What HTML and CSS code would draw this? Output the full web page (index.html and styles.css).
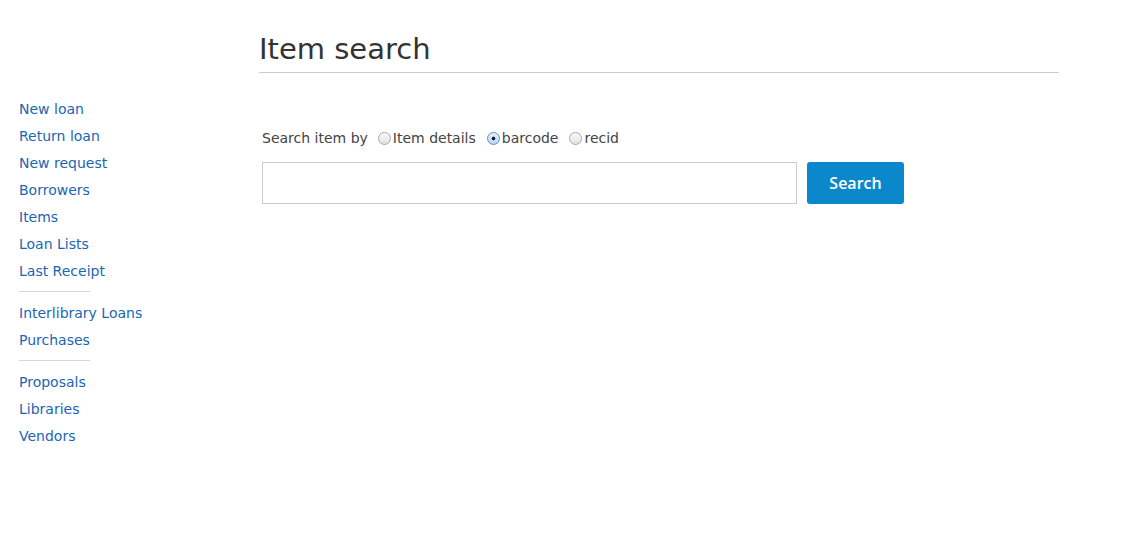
FILE: index.html
```html
<!DOCTYPE html>
<html>
<head>
<meta charset="utf-8">
<link rel="stylesheet" href="styles.css">
</head>
<body>
<div class="page">
  <nav class="sidebar">
    <a href="#">New loan</a>
    <a href="#">Return loan</a>
    <a href="#">New request</a>
    <a href="#">Borrowers</a>
    <a href="#">Items</a>
    <a href="#">Loan Lists</a>
    <a href="#">Last Receipt</a>
    <div class="sep"></div>
    <a href="#">Interlibrary Loans</a>
    <a href="#">Purchases</a>
    <div class="sep"></div>
    <a href="#">Proposals</a>
    <a href="#">Libraries</a>
    <a href="#">Vendors</a>
  </nav>
  <main class="main">
    <h1 class="title">Item search</h1>
    <form class="search">
      <div class="by">
        <span class="label">Search item by</span>
        <label class="opt"><input type="radio" name="by">Item details</label>
        <label class="opt"><input type="radio" name="by" checked>barcode</label>
        <label class="opt"><input type="radio" name="by">recid</label>
      </div>
      <div class="row">
        <input class="field" type="text">
        <button class="btn" type="button">Search</button>
      </div>
    </form>
  </main>
</div>
</body>
</html>
```
FILE: styles.css
```css
html, body {
  margin: 0;
  padding: 0;
  background: #fff;
}
body {
  font-family: "DejaVu Sans", Verdana, sans-serif;
  color: #333;
}
.page {
  display: flex;
}
.sidebar {
  width: 221px;
  padding: 96px 0 0 19px;
  display: flex;
  flex-direction: column;
  align-items: flex-start;
}
.sidebar a {
  color: #1a66b4;
  text-decoration: none;
  font-size: 14px;
  line-height: 27px;
  white-space: nowrap;
}
.sep {
  width: 71px;
  height: 1px;
  background: #d6d6d6;
  margin: 6px 0 8px;
}
.main {
  width: 800px;
  padding-left: 19px;
}
.title {
  margin: 28px 0 0;
  font-size: 29px;
  font-weight: normal;
  line-height: 42px;
  color: #333;
  padding-bottom: 2px;
  border-bottom: 1px solid #ccc;
}
.search {
  margin: 50px 0 0 3px;
}
.by {
  display: flex;
  align-items: center;
  font-size: 14px;
  color: #444;
  height: 30px;
}
.label {
  margin-right: 10px;
}
.opt {
  display: flex;
  align-items: center;
  margin-right: 11px;
}
.opt input {
  appearance: none;
  -webkit-appearance: none;
  width: 13px;
  height: 13px;
  margin: 0 2px 0 0;
  border: 1px solid #a8a8a8;
  border-radius: 50%;
  background: linear-gradient(#fafafa, #e2e2e2);
}
.opt input:checked {
  border-color: #5b8fd0;
  background: radial-gradient(circle, #222 0 1.6px, transparent 2.2px), linear-gradient(#e9f1fb, #bcd4f0);
}
.row {
  display: flex;
  margin-top: 9px;
  gap: 10px;
}
.field {
  width: 535px;
  height: 42px;
  box-sizing: border-box;
  border: 1px solid #ccc;
  margin: 0;
  padding: 0 8px;
}
.btn {
  width: 97px;
  height: 42px;
  background: #0b87cb;
  color: #fff;
  border: none;
  border-radius: 3px;
  font-family: "Open Sans", sans-serif;
  font-weight: 600;
  font-size: 16px;
}
```
